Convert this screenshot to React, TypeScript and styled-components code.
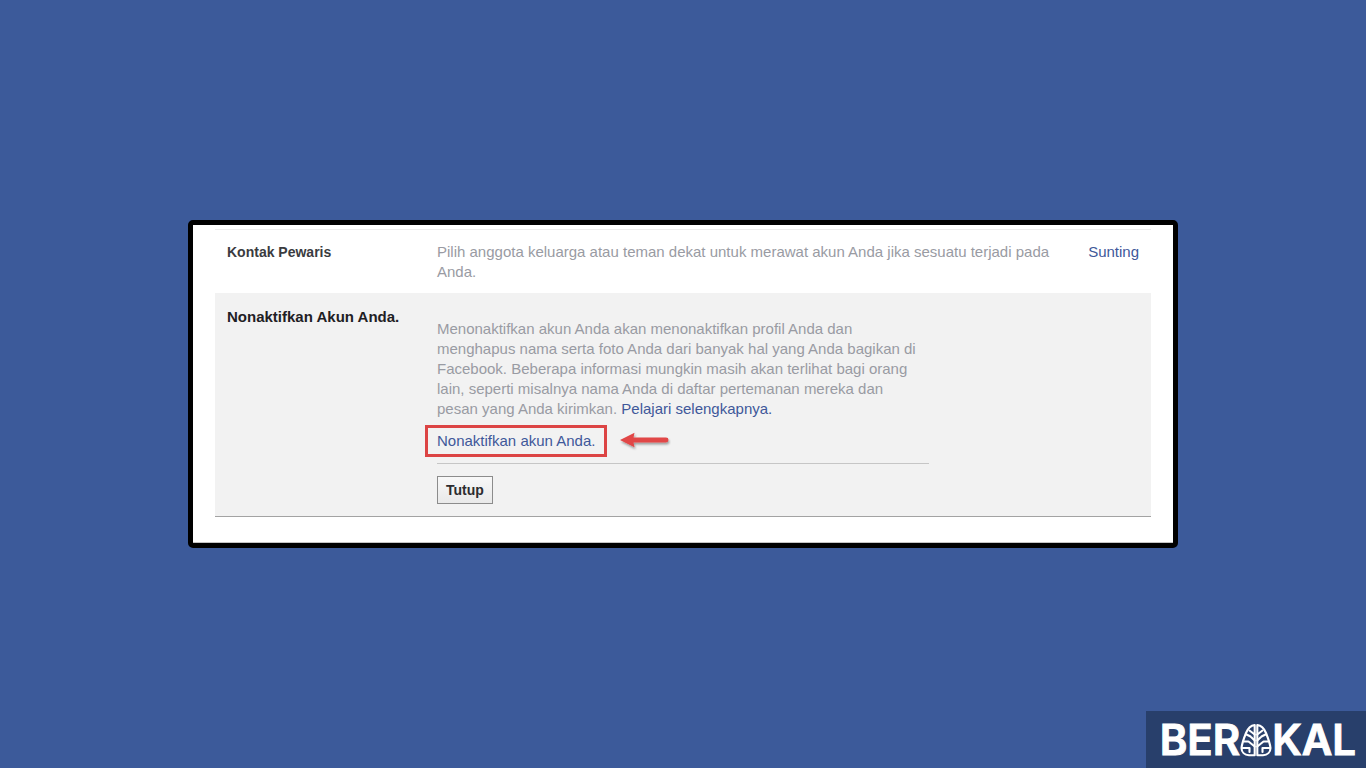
import React from "react";
import styled, { createGlobalStyle } from "styled-components";

const GlobalStyle = createGlobalStyle`
  *, *::before, *::after { box-sizing: border-box; }
  body {
    margin: 0;
    background: #3c5a9a;
    font-family: "Liberation Sans", Arial, sans-serif;
    font-size: 15px;
    line-height: 20px;
    color: #999ba3;
  }
`;

const Page = styled.main`
  min-height: 100vh;
  display: flex;
  align-items: center;
  justify-content: center;
`;

const Frame = styled.section`
  width: 100%;
  max-width: 990px;
  padding: 4px 22px 26px;
  background: #fff;
  border: 5px solid #000;
  border-radius: 5px;
  box-shadow: inset 0 -1px #c4c4c4;
`;

const Row = styled.div<{ $open?: boolean }>`
  display: grid;
  grid-template-columns: 198px minmax(0, 1fr) auto;
  column-gap: 12px;
  padding: ${(p) => (p.$open ? "14px 12px 12px" : "12px 12px 11px")};
  background: ${(p) => (p.$open ? "#f2f2f2" : "#fff")};
  border-top: ${(p) => (p.$open ? "none" : "1px solid #ececec")};
  border-bottom: ${(p) => (p.$open ? "1px solid #a3a3a3" : "none")};
`;

const Label = styled.h2<{ $small?: boolean }>`
  margin: 0;
  font-size: ${(p) => (p.$small ? "14px" : "15px")};
  line-height: 20px;
  font-weight: bold;
  color: ${(p) => (p.$small ? "#3a3b40" : "#1f2024")};
`;

const Text = styled.p`
  margin: 0;
`;

const Explanation = styled(Text)`
  max-width: 488px;
`;

const Link = styled.a`
  color: #40589a;
  text-decoration: none;
  &:hover { text-decoration: underline; }
`;

const Details = styled.div`
  max-width: 492px;
  padding-top: 12px;
`;

const Action = styled.div`
  display: flex;
  align-items: center;
  gap: 12px;
  margin: 6px 0 6px -12px;
`;

const Highlight = styled.div`
  padding: 2px 9px 3px;
  border: 3px solid #dc4444;
  line-height: 21px;
`;

const Footer = styled.div`
  padding-top: 12px;
  border-top: 1px solid #c6c6c6;
`;

const CloseButton = styled.button`
  display: block;
  height: 28px;
  padding: 0 8px;
  border: 1px solid #8c8c8c;
  background: linear-gradient(#f8f8f8, #e9e9e9);
  color: #2c2c2f;
  font: bold 14px "Liberation Sans", Arial, sans-serif;
`;

const Brand = styled.aside`
  position: fixed;
  right: 0;
  bottom: 0;
  display: flex;
  align-items: center;
  justify-content: flex-end;
  width: 220px;
  height: 57px;
  padding-right: 10px;
  background: #283f6b;
  color: #fff;
  font: 600 42px/56px Inter, sans-serif;
  -webkit-text-stroke: 1px #fff;
  stroke-linejoin: round;
`;

const Arrow = () => (
  <svg width="52" height="20" viewBox="0 0 52 20" aria-hidden="true">
    <defs>
      <filter id="arrow-shadow" x="-10%" y="-20%" width="125%" height="160%">
        <feDropShadow dx="1" dy="2" stdDeviation="1" floodColor="#000" floodOpacity="0.35" />
      </filter>
    </defs>
    <path
      d="M1 9 L15.500 1.800 L14.500 6.600 H47 Q49.500 6.600 49.500 9 Q49.500 11.400 47 11.400 H14.500 L15.500 16.200 Z"
      fill="#e14646"
      filter="url(#arrow-shadow)"
    />
  </svg>
);

const BrainMark = () => (
  <svg
    width="32"
    height="34"
    viewBox="0 0 32 34"
    fill="none"
    stroke="#fff"
    strokeWidth="2.1"
    strokeLinecap="round"
    strokeLinejoin="round"
    aria-hidden="true"
  >
    <path d="M14.700 2 C10.500 2.500 8 5 6 10 C4 15 2 20 1.500 25 C1.500 29 4.500 32 9 32.300 H14.700 V2" />
    <path d="M17.300 2 C21.500 2.500 24 5 26 10 C28 15 30 20 30.500 25 C30.500 29 27.500 32 23 32.300 H17.300 V2" />
    <path d="M14.700 11.500 L9.500 7.500 M10.500 13.500 L6.500 11.500 M14.700 17.500 L10.500 13.500 M14.700 23.500 L8.500 18.500 L4 18.500 M2.500 25 H9.500 V29" />
    <path d="M17.300 11.500 L22.500 7.500 M21.500 13.500 L25.500 11.500 M17.300 17.500 L21.500 13.500 M17.300 23.500 L23.500 18.500 L28 18.500 M29.500 25 H22.500 V29" />
  </svg>
);

export default function App() {
  return (
    <>
      <GlobalStyle />
      <Page>
        <Frame>
          <Row>
            <Label $small>Kontak Pewaris</Label>
            <Text>
              Pilih anggota keluarga atau teman dekat untuk merawat akun Anda jika sesuatu terjadi pada Anda.
            </Text>
            <Link href="#sunting">Sunting</Link>
          </Row>
          <Row $open>
            <Label>Nonaktifkan Akun Anda.</Label>
            <Details>
              <Explanation>
                Menonaktifkan akun Anda akan menonaktifkan profil Anda dan menghapus nama serta foto Anda dari
                banyak hal yang Anda bagikan di Facebook. Beberapa informasi mungkin masih akan terlihat bagi
                orang lain, seperti misalnya nama Anda di daftar pertemanan mereka dan pesan yang Anda kirimkan.{" "}
                <Link href="#selengkapnya">Pelajari selengkapnya.</Link>
              </Explanation>
              <Action>
                <Highlight>
                  <Link href="#nonaktifkan">Nonaktifkan akun Anda.</Link>
                </Highlight>
                <Arrow />
              </Action>
              <Footer>
                <CloseButton type="button">Tutup</CloseButton>
              </Footer>
            </Details>
          </Row>
        </Frame>
      </Page>
      <Brand>
        <span>BER</span>
        <BrainMark />
        <span>KAL</span>
      </Brand>
    </>
  );
}
